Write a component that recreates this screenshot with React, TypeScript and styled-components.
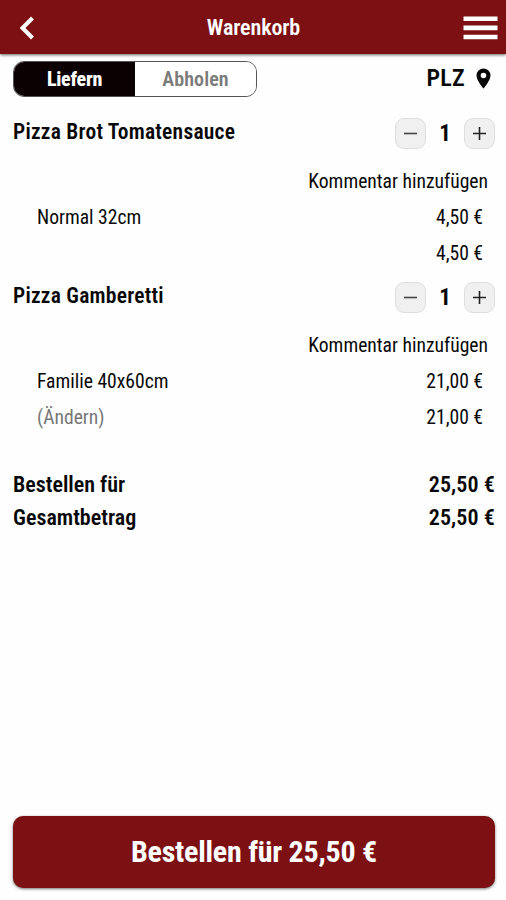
import React from "react";
import styled, { createGlobalStyle } from "styled-components";

const GlobalStyle = createGlobalStyle`
  * { box-sizing: border-box; }
  body {
    margin: 0;
    background: #fefefe;
    color: #080808;
    font-family: "Roboto Condensed", Roboto, sans-serif;
    font-stretch: 75%;
  }
  button { font: inherit; font-stretch: 75%; color: inherit; border: 0; padding: 0; background: none; }
`;

const Screen = styled.div`
  display: flex;
  flex-direction: column;
  height: 900px;
  width: 506px;
`;

const Header = styled.header`
  display: grid;
  grid-template-columns: 60px 1fr 60px;
  align-items: center;
  flex: none;
  height: 54px;
  color: #fff;
  background: #7c1013;
  box-shadow: 0 1px 3px rgba(0, 0, 0, 0.6);
`;

const IconButton = styled.button<{ $end?: boolean }>`
  display: flex;
  justify-content: ${(p) => (p.$end ? "flex-end" : "flex-start")};
  padding: ${(p) => (p.$end ? "1px 8px 0 0" : "1px 0 0 19px")};
`;

const Text = styled.span<{
  $size: number;
  $weight?: number;
  $spacing?: number;
  $color?: string;
}>`
  white-space: nowrap;
  font-size: ${(p) => p.$size}px;
  line-height: 28px;
  font-weight: ${(p) => p.$weight ?? 400};
  letter-spacing: ${(p) => p.$spacing ?? 0}px;
  color: ${(p) => p.$color ?? "inherit"};
`;

const Title = styled.h1`
  margin: 0;
  padding: 1px 0 0 1px;
  display: flex;
  justify-content: center;
`;

const Toolbar = styled.div`
  display: flex;
  flex: none;
  justify-content: space-between;
  align-items: flex-start;
  padding: 7px 14px 0 13px;
  height: 50px;
`;

const Segments = styled.div`
  display: flex;
  width: 244px;
  height: 36px;
  border: 1px solid #555;
  border-radius: 11px;
  overflow: hidden;
`;

const Segment = styled.button<{ $active?: boolean }>`
  flex: 1;
  display: flex;
  justify-content: center;
  align-items: center;
  background: ${(p) => (p.$active ? "#0b0002" : "#fff")};
  color: ${(p) => (p.$active ? "#fff" : "#7b7b7b")};
`;

const Zip = styled.div`
  display: flex;
  align-items: center;
  height: 34px;
  gap: 11px;
`;

const Item = styled.section`
  display: flex;
  flex: none;
  flex-direction: column;
  padding: 13px 11px 0 13px;
`;

const ItemHead = styled.div`
  display: flex;
  justify-content: space-between;
  align-items: flex-start;
  height: 51px;
  padding-top: 1px;
`;

const Stepper = styled.div`
  display: flex;
  gap: 13px;
`;

const Count = styled.div`
  width: 12px;
  display: flex;
  justify-content: center;
  padding-top: 2px;
`;

const StepButton = styled.button`
  display: flex;
  align-items: center;
  justify-content: center;
  width: 31px;
  height: 31px;
  border: 1px solid #dedede;
  border-radius: 9px;
  background: #f0f0f0;
`;

const CommentRow = styled.div`
  display: flex;
  justify-content: flex-end;
  padding-right: 7px;
`;

const Line = styled.div`
  display: flex;
  justify-content: space-between;
  margin-top: 8px;
  padding: 0 12px 0 24px;
`;

const Totals = styled.section`
  display: flex;
  flex-direction: column;
  gap: 5px;
  margin-top: 39px;
  padding: 0 11px 0 13px;
`;

const TotalRow = styled.div`
  display: flex;
  justify-content: space-between;
`;

const OrderButton = styled.button`
  display: flex;
  flex: none;
  align-items: center;
  justify-content: center;
  height: 72px;
  margin: auto 11px 12px 13px;
  border-radius: 10px;
  background: #7c1013;
  color: #fff;
  box-shadow: 0 1px 3px rgba(0, 0, 0, 0.55);
`;

const items = [
  { name: "Pizza Brot Tomatensauce", lines: [["Normal 32cm", "4,50 €"], ["", "4,50 €"]] },
  { name: "Pizza Gamberetti", lines: [["Familie 40x60cm", "21,00 €"], ["(Ändern)", "21,00 €"]] },
];

const totals = [
  ["Bestellen für", "25,50 €"],
  ["Gesamtbetrag", "25,50 €"],
];

export default function App() {
  return (
    <>
      <GlobalStyle />
      <Screen>
        <Header>
          <IconButton aria-label="Zurück">
            <svg width="16" height="24" viewBox="0 0 16 24" fill="none" stroke="#fff" strokeWidth="4">
              <path d="M13.500 2 3.500 12l10 10" />
            </svg>
          </IconButton>
          <Title><Text $size={22} $weight={600} $spacing={-0.1}>Warenkorb</Text></Title>
          <IconButton $end aria-label="Menü">
            <svg width="35" height="24" viewBox="0 0 35 24" fill="#fff">
              <path d="M.5.500h34v4.600H.5zM.5 9.600h34v4.600H.5zM.5 18.700h34v4.600H.5z" />
            </svg>
          </IconButton>
        </Header>
        <Toolbar>
          <Segments>
            <Segment $active><Text $size={20} $weight={800} $spacing={-0.25}>Liefern</Text></Segment>
            <Segment><Text $size={20} $weight={600} $spacing={0.1}>Abholen</Text></Segment>
          </Segments>
          <Zip>
            <Text $size={24} $weight={600} $spacing={0.3}>PLZ</Text>
            <svg width="16" height="21" viewBox="0 0 16 21" fill="#080808">
              <path fillRule="evenodd" d="M7.500.5a7 7 0 0 0-7 7C.5 12.500 7.500 20.500 7.500 20.500s7-8 7-13a7 7 0 0 0-7-7Zm0 4.200a2.800 2.800 0 1 1 0 5.600 2.800 2.800 0 0 1 0-5.600Z" />
            </svg>
          </Zip>
        </Toolbar>
        {items.map((item) => (
          <Item key={item.name}>
            <ItemHead>
              <Text $size={21.5} $weight={600} $spacing={0.24}>{item.name}</Text>
              <Stepper>
                <StepButton aria-label="Weniger">
                  <svg width="13" height="13" stroke="#444" strokeWidth="1.600"><path d="M0 6.500h13" /></svg>
                </StepButton>
                <Count><Text $size={23} $weight={700}>1</Text></Count>
                <StepButton aria-label="Mehr">
                  <svg width="13" height="13" stroke="#222" strokeWidth="1.600"><path d="M0 6.500h13M6.500 0v13" /></svg>
                </StepButton>
              </Stepper>
            </ItemHead>
            <CommentRow><Text $size={19.6}>Kommentar hinzufügen</Text></CommentRow>
            {item.lines.map(([label, price], i) => (
              <Line key={i}>
                <Text $size={19.6} $color={i ? "#777" : undefined}>{label}</Text>
                <Text $size={19.6}>{price}</Text>
              </Line>
            ))}
          </Item>
        ))}
        <Totals>
          {totals.map(([label, amount]) => (
            <TotalRow key={label}>
              <Text $size={22} $weight={600}>{label}</Text>
              <Text $size={22} $weight={600} $spacing={0.1}>{amount}</Text>
            </TotalRow>
          ))}
        </Totals>
        <OrderButton><Text $size={30} $weight={700} $spacing={-0.24}>Bestellen für 25,50 €</Text></OrderButton>
      </Screen>
    </>
  );
}
